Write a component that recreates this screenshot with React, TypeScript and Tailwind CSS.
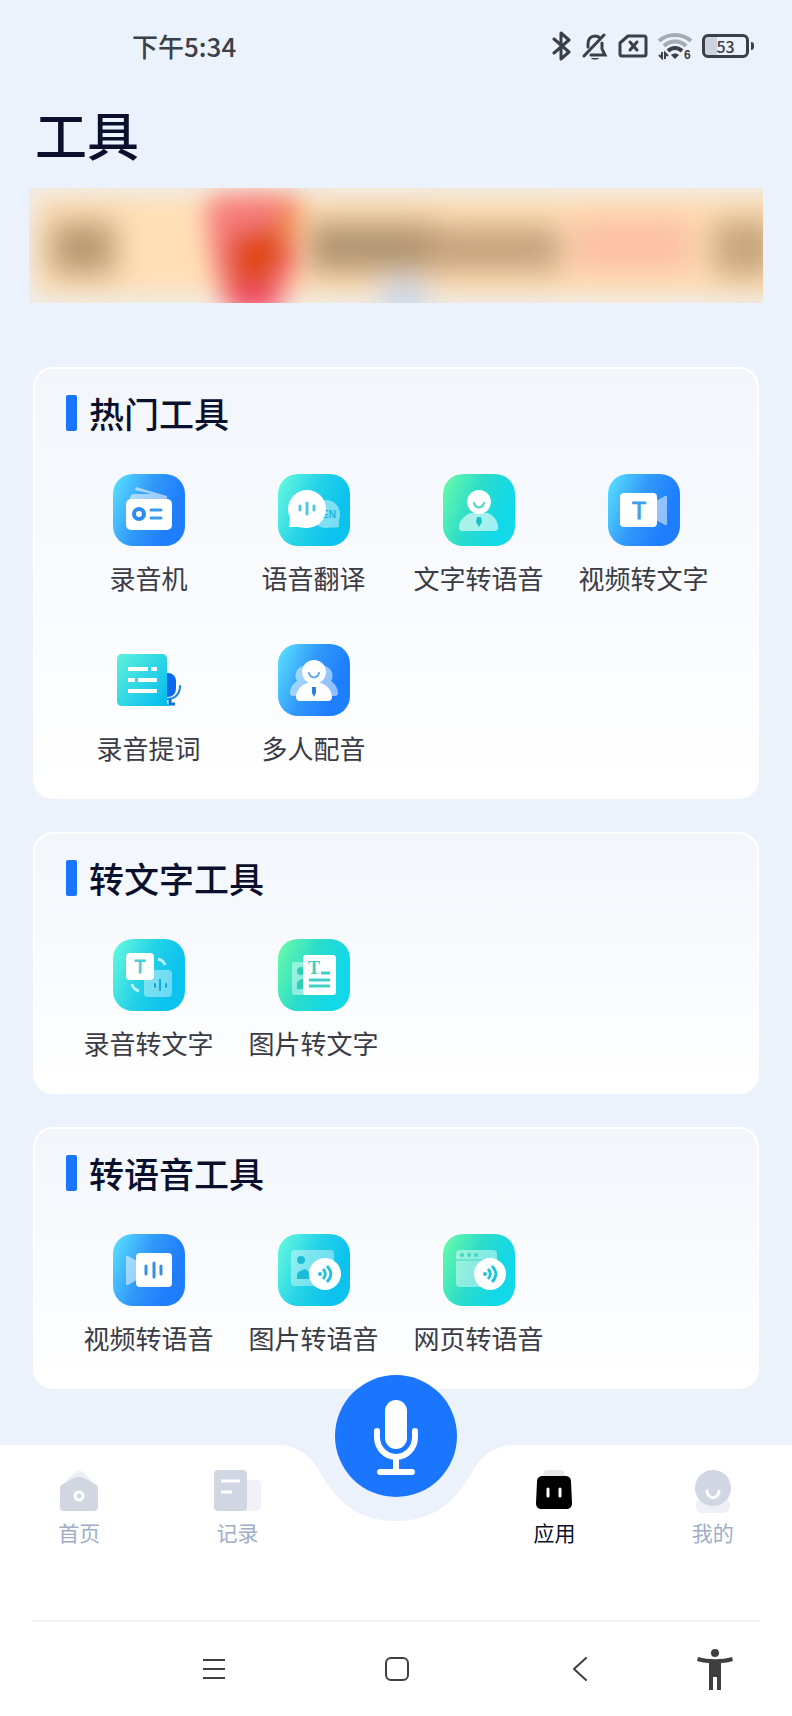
import { type ReactNode } from "react";

type Tone = "blue" | "teal" | "green";

const tones: Record<Tone, [string, string, string]> = {
  blue: ["#55daff", "#3199f9", "#1e7efe"],
  teal: ["#60f6e0", "#26d3e6", "#0cc2ee"],
  green: ["#63f8ac", "#2bdcca", "#12d8e8"],
};

type Tool = { name: string; icon: ReactNode };

const sections: { title: string; tools: Tool[] }[] = [
  {
    title: "热门工具",
    tools: [
      { name: "录音机", icon: <RecorderIcon /> },
      { name: "语音翻译", icon: <TranslateIcon /> },
      { name: "文字转语音", icon: <TextToVoiceIcon /> },
      { name: "视频转文字", icon: <VideoToTextIcon /> },
      { name: "录音提词", icon: <PrompterIcon /> },
      { name: "多人配音", icon: <DubbingIcon /> },
    ],
  },
  {
    title: "转文字工具",
    tools: [
      { name: "录音转文字", icon: <AudioToTextIcon /> },
      { name: "图片转文字", icon: <ImageToTextIcon /> },
    ],
  },
  {
    title: "转语音工具",
    tools: [
      { name: "视频转语音", icon: <VideoToVoiceIcon /> },
      { name: "图片转语音", icon: <ImageToVoiceIcon /> },
      { name: "网页转语音", icon: <WebToVoiceIcon /> },
    ],
  },
];

export default function App() {
  return (
    <div className="flex min-h-screen flex-col bg-[#ebf2fb] font-['Noto_Sans_CJK_SC',sans-serif]">
      <StatusBar />
      <main className="flex-1 px-[33px] pb-14">
        <h1 className="mt-10 pl-0.5 text-[52px] leading-[60px] font-medium text-[#0a102c]">
          工具
        </h1>
        <Banner />
        <div className="mt-16 flex flex-col gap-[33px]">
          {sections.map((section) => (
            <ToolSection key={section.title} {...section} />
          ))}
        </div>
      </main>
      <TabBar />
      <SystemBar />
    </div>
  );
}

function StatusBar() {
  return (
    <header className="flex h-16 items-end justify-between pr-[38px] pl-[132px] text-[#3b3f47]">
      <p className="text-[26px] leading-9 font-medium">下午5:34</p>
      <div className="flex h-9 items-center gap-2.5">
        <svg width="20" height="30" viewBox="0 0 20 30" fill="none" stroke="currentColor" strokeWidth="3" strokeLinejoin="round" strokeLinecap="round">
          <path d="M2 8l15 13-8 7V2l8 7L2 22" />
        </svg>
        <svg width="26" height="28" viewBox="0 0 26 28" fill="none" stroke="currentColor" strokeWidth="3" strokeLinecap="round">
          <path d="M6 15v-3c0-5 3-8 7-8 2 0 4 1 5 2M20 11v6l3 6H9M2 24L22 3" />
          <path d="M9 26h8c-1 2-7 2-8 0z" fill="currentColor" stroke="none" />
        </svg>
        <svg width="30" height="24" viewBox="0 0 30 24" fill="none" stroke="currentColor" strokeWidth="3" strokeLinejoin="round" strokeLinecap="round">
          <path d="M10 2h16a2 2 0 0 1 2 2v16a2 2 0 0 1-2 2H4a2 2 0 0 1-2-2V9z" />
          <path d="M12 8l7 8M19 8l-7 8" />
        </svg>
        <svg className="overflow-visible" width="34" height="28" viewBox="0 0 34 28" fill="none" stroke="currentColor">
          <path d="M1 9c9-8 23-8 32 0M6 14c6-6 16-6 22 0" stroke="#a6acb6" strokeWidth="4" />
          <path d="M10 19c4-4 10-4 14 0" strokeWidth="4" />
          <path d="M13 23l4 4 4-4c-2-2-6-2-8 0z" fill="currentColor" stroke="none" />
          <path d="M4 20v6L1 23M7 27v-6l3 3" strokeWidth="2" />
          <text x="26" y="27" fontSize="12" fontWeight="700" fill="currentColor" stroke="none" fontFamily="Liberation Sans, sans-serif">
            6
          </text>
        </svg>
        <div className="flex items-center gap-0.5">
          <span className="flex h-6 w-[47px] items-center justify-center rounded-md border-3 border-current bg-linear-to-r from-[#cdd3dc] from-30% to-transparent to-30% text-base leading-4 font-medium">
            53
          </span>
          <span className="h-2 w-[3px] rounded-r bg-current" />
        </div>
      </div>
    </header>
  );
}

function Banner() {
  return (
    <svg
      className="-mx-1 mt-6 block h-[115px] w-[calc(100%+8px)]"
      viewBox="0 0 734 115"
      preserveAspectRatio="none"
      role="img"
      aria-label="活动横幅"
    >
      <defs>
        <filter id="soft" x="-50%" y="-100%" width="200%" height="300%">
          <feGaussianBlur stdDeviation="15" />
        </filter>
        <filter id="softer" x="-50%" y="-60%" width="200%" height="220%">
          <feGaussianBlur stdDeviation="12" />
        </filter>
      </defs>
      <rect width="734" height="115" fill="#eeedea" />
      <rect x="6" y="8" width="750" height="99" fill="#ffdfb6" filter="url(#softer)" />
      <g filter="url(#soft)">
        <rect x="22" y="34" width="64" height="52" fill="#b8986f" />
        <rect x="278" y="34" width="130" height="50" fill="#b0946f" />
        <rect x="400" y="38" width="132" height="46" fill="#c6a27c" />
        <rect x="544" y="30" width="120" height="54" fill="#fcc0a2" />
        <rect x="684" y="32" width="64" height="56" fill="#c6a57c" />
        <ellipse cx="375" cy="112" rx="24" ry="20" fill="#c8d6ee" />
      </g>
      <g filter="url(#softer)">
        <path d="M178 12c20-6 60-8 92-2v52c0 20-12 42-22 58h-50c-12-26-20-60-20-108z" fill="#f67c7a" />
        <path d="M198 50l62-20v44l-26 26h-30z" fill="#e04818" />
        <rect x="202" y="100" width="46" height="26" fill="#f0506e" />
        <rect x="250" y="16" width="22" height="40" fill="#f0905c" />
      </g>
    </svg>
  );
}

function ToolSection({ title, tools }: { title: string; tools: Tool[] }) {
  return (
    <section className="rounded-[20px] border-2 border-white bg-linear-to-b from-[#f2f6fb] to-white px-[31px] pt-[26px] pb-[31px]">
      <div className="flex h-9 items-center gap-3">
        <span className="h-9 w-[11px] rounded-xs bg-[#1a75fe]" />
        <h2 className="text-[35px] leading-9 font-medium text-[#0a102c]">{title}</h2>
      </div>
      <div className="mt-[43px] grid grid-cols-4 gap-y-12">
        {tools.map((tool) => (
          <button key={tool.name} type="button" className="flex flex-col items-center">
            {tool.icon}
            <span className="mt-3.5 text-[26px] leading-9 whitespace-nowrap text-[#3a3b45]">
              {tool.name}
            </span>
          </button>
        ))}
      </div>
    </section>
  );
}

function TabBar() {
  return (
    <nav className="relative bg-white pb-[74px]">
      <svg
        className="absolute top-0 left-1/2 -translate-x-1/2"
        width="240"
        height="76"
        viewBox="0 0 240 76"
        fill="#ebf2fb"
      >
        <path d="M0 0C22 0 34 11 42 24C57 50 76 76 120 76S183 50 198 24C206 11 218 0 240 0z" />
      </svg>
      <div className="grid grid-cols-5 pt-[25px]">
        <TabItem label="首页">
          <path d="M24 0c2 0 12 9 13 11H11C12 9 22 0 24 0z" fill="#edeff4" />
          <path d="M5 19c0-3 1-4 3-5l7-4c6-4 12-4 18 0l7 4c2 1 3 2 3 5v17c0 4-1 5-5 5H10c-4 0-5-1-5-5z" fill="#d0d6e2" />
          <circle cx="24" cy="26" r="4" fill="none" stroke="#fff" strokeWidth="3" />
        </TabItem>
        <TabItem label="记录">
          <rect x="22" y="10" width="25" height="31" rx="4" fill="#f0f2f7" />
          <rect x="0" y="0" width="33" height="41" rx="4" fill="#d0d6e2" />
          <path d="M7 11h19M7 22h11" stroke="#fff" strokeWidth="3" />
        </TabItem>
        <button
          type="button"
          aria-label="录音"
          className="absolute -top-[70px] left-1/2 size-[122px] -translate-x-1/2 rounded-full bg-[#1a76ff]"
        >
          <svg viewBox="0 0 122 122" fill="none" stroke="#fff" strokeLinecap="round">
            <rect x="50" y="25" width="22" height="49" rx="11" fill="#fff" stroke="none" />
            <path d="M42 56v6a19 20 0 0 0 38 0v-6M61 83v12" strokeWidth="6" />
            <path d="M45 97h32" strokeWidth="6" />
          </svg>
        </button>
        <span />
        <TabItem label="应用" active>
          <path d="M12 8l2-6c0-1 1-2 3-2h14c2 0 3 1 3 2l2 6z" fill="#e7e7e8" />
          <path d="M13 6h22c4 0 6 2 6 6l1 21c0 4-2 6-6 6H12c-4 0-6-2-6-6l1-21c0-4 2-6 6-6z" fill="#000" />
          <path d="M18 19v7M30 19v7" stroke="#fff" strokeWidth="3" strokeLinecap="round" />
        </TabItem>
        <TabItem label="我的">
          <rect x="7" y="28" width="34" height="15" rx="6" fill="#eef0f5" />
          <circle cx="24" cy="18" r="18" fill="#d0d6e2" />
          <path d="M18 21c1 9 11 9 12 0" fill="none" stroke="#fff" strokeWidth="3" strokeLinecap="round" />
        </TabItem>
      </div>
    </nav>
  );
}

function TabItem({
  label,
  active,
  children,
}: {
  label: string;
  active?: boolean;
  children: ReactNode;
}) {
  return (
    <a href="#" className="flex flex-col items-center">
      <svg width="48" height="44" viewBox="0 0 48 44">
        {children}
      </svg>
      <span
        className={
          active
            ? "mt-1 text-[21px] leading-7 text-[#0a102c]"
            : "mt-1 text-[21px] leading-7 text-[#a0adc6]"
        }
      >
        {label}
      </span>
    </a>
  );
}

function SystemBar() {
  return (
    <footer className="bg-white px-8 text-[#3f3f3f]">
      <div className="h-0.5 bg-[#f4f4f5]" />
      <div className="grid h-[94px] grid-cols-[90fr_184fr_182fr_184fr_86fr_2fr] place-items-center">
        <span />
        <button type="button" aria-label="最近任务">
          <svg width="24" height="24" viewBox="0 0 24 24" stroke="currentColor" strokeWidth="2">
            <path d="M1 3h22M1 12h22M1 21h22" />
          </svg>
        </button>
        <button type="button" aria-label="主屏幕">
          <svg width="24" height="24" viewBox="0 0 24 24" fill="none" stroke="currentColor" strokeWidth="2">
            <rect x="1" y="1" width="22" height="22" rx="5" />
          </svg>
        </button>
        <button type="button" aria-label="返回">
          <svg width="24" height="24" viewBox="0 0 24 24" fill="none" stroke="currentColor" strokeWidth="2" strokeLinecap="round" strokeLinejoin="round">
            <path d="M18 1L6 12l12 11" />
          </svg>
        </button>
        <button type="button" aria-label="无障碍">
          <svg width="36" height="42" viewBox="0 0 36 42" fill="currentColor">
            <circle cx="18" cy="5" r="4" />
            <path d="M1 9c11 3 23 3 34 0l1 4c-4 1-8 2-12 2v27h-4V29h-4v13h-4V15c-4 0-8-1-12-2z" />
          </svg>
        </button>
      </div>
    </footer>
  );
}

function Tile({ tone, children }: { tone: Tone; children: ReactNode }) {
  const [from, mid, to] = tones[tone];

  return (
    <svg width="72" height="72" viewBox="0 0 72 72" fill="none">
      <defs>
        <linearGradient id={`tile-${tone}`} x1="0" y1="0.2" x2="1" y2="0.6">
          <stop offset="0" stopColor={from} />
          <stop offset="0.45" stopColor={mid} />
          <stop offset="0.85" stopColor={to} />
        </linearGradient>
      </defs>
      <rect width="72" height="72" rx="20" fill={`url(#tile-${tone})`} />
      {children}
    </svg>
  );
}

function RecorderIcon() {
  return (
    <Tile tone="blue">
      <path d="M23 13l31 9v4H17c0-4 1-6 5-6h16l-16-4z" fill="#fff" opacity="0.55" />
      <rect x="13" y="25" width="46" height="31" rx="5" fill="#fff" />
      <circle cx="26" cy="40" r="5" stroke="#2a8cf0" strokeWidth="4" />
      <path d="M38 36h10M38 44h10" stroke="#3b9af0" strokeWidth="3" strokeLinecap="round" />
    </Tile>
  );
}

function TranslateIcon() {
  return (
    <Tile tone="teal">
      <path d="M48 26a14 14 0 0 1 14 14c0 4-1 5-1 7v6c-4 1-7 0-13 1a14 14 0 0 1 0-28z" fill="#fff" opacity="0.45" />
      <text x="44" y="44" fontSize="10" fontWeight="700" fill="#1bb6de" fontFamily="Liberation Sans, sans-serif">
        EN
      </text>
      <path d="M29 16a19 19 0 1 1 0 38c-6 0-7-1-11-1h-7l1-8c0-3-2-5-2-10a19 19 0 0 1 19-19z" fill="#fff" />
      <path d="M22 32v4M29 29v11M36 32v4" stroke="#4cc9e4" strokeWidth="3" strokeLinecap="round" />
    </Tile>
  );
}

function TextToVoiceIcon() {
  return (
    <Tile tone="green">
      <path d="M27 39h18c6 3 10 8 10 14 0 3-1 4-4 4H20c-3 0-4-1-4-4 0-6 5-11 11-14z" fill="#fff" opacity="0.6" />
      <circle cx="36" cy="28" r="12" fill="#fff" />
      <path d="M31 29c2 6 8 6 10 0" stroke="#3cd6c0" strokeWidth="2" strokeLinecap="round" />
      <path d="M34 43h4l1 5-3 5-3-5z" fill="#1fc2c2" />
    </Tile>
  );
}

function VideoToTextIcon() {
  return (
    <Tile tone="blue">
      <path d="M48 27l9-5h2v29h-2l-9-5z" fill="#fff" opacity="0.5" />
      <rect x="12" y="19" width="37" height="34" rx="4" fill="#fff" />
      <text x="31" y="45" textAnchor="middle" fontSize="23" fill="#3f9fe8" stroke="#3f9fe8" fontFamily="Liberation Sans, sans-serif">
        T
      </text>
    </Tile>
  );
}

function PrompterIcon() {
  return (
    <svg width="72" height="72" viewBox="0 0 72 72" fill="none">
      <defs>
        <linearGradient id="prompter" x1="0" y1="0" x2="1" y2="0.8">
          <stop offset="0" stopColor="#5ef3dc" />
          <stop offset="1" stopColor="#06bdee" />
        </linearGradient>
      </defs>
      <rect x="46" y="29" width="17" height="24" rx="8" fill="#0a68f0" />
      <path d="M67 42c0 8-5 13-13 13" stroke="#1685e8" strokeWidth="2" strokeLinecap="round" />
      <path d="M57 55v5h5" stroke="#0f72d8" strokeWidth="3" />
      <path d="M9 10h40c3 0 5 2 5 5v42c0 2 1 4 4 5H9c-3 0-5-2-5-5V15c0-3 2-5 5-5z" fill="url(#prompter)" />
      <path d="M15 23h20v4H15zM38 23h6v4h-6zM15 34h7v4h-7zM25 34h19v4H25zM15 45h29v4H15z" fill="#fff" />
    </svg>
  );
}

function DubbingIcon() {
  return (
    <Tile tone="blue">
      <path d="M25 22a10 10 0 0 0-6 15c-4 3-7 7-7 12 0 2 1 3 3 3h42c2 0 3-1 3-3 0-5-3-9-7-12a10 10 0 0 0-6-15z" fill="#fff" opacity="0.5" />
      <circle cx="36" cy="28" r="12" fill="#fff" />
      <path d="M29 39h14c6 2 11 8 11 14 0 2-1 4-4 4H22c-3 0-4-2-4-4 0-6 5-12 11-14z" fill="#fff" />
      <path d="M31 29c2 6 8 6 10 0" stroke="#5ea6ee" strokeWidth="2" strokeLinecap="round" />
      <path d="M34 43h4v6l-2 4-2-4z" fill="#2a7fd8" />
    </Tile>
  );
}

function AudioToTextIcon() {
  return (
    <Tile tone="teal">
      <rect x="31" y="31" width="28" height="27" rx="4" fill="#fff" opacity="0.4" />
      <path d="M42 45v3M47 41v10M53 45v3" stroke="#11a8dc" strokeWidth="2" strokeLinecap="round" />
      <path d="M45 20c4 1 6 3 7 6M19 45c1 4 3 6 7 7" stroke="#fff" strokeWidth="3" opacity="0.7" />
      <rect x="13" y="14" width="28" height="27" rx="4" fill="#fff" />
      <text x="27" y="34" textAnchor="middle" fontSize="18" fill="#48cfe0" stroke="#48cfe0" fontFamily="Liberation Sans, sans-serif">
        T
      </text>
    </Tile>
  );
}

function ImageToTextIcon() {
  return (
    <Tile tone="green">
      <rect x="14" y="23" width="20" height="33" rx="3" fill="#fff" opacity="0.45" />
      <circle cx="23" cy="32" r="4" fill="#2fcfb4" />
      <path d="M19 50v-5c0-3 3-5 7-5v10z" fill="#2fcfb4" />
      <rect x="25" y="16" width="33" height="40" rx="3" fill="#fff" />
      <text x="36" y="35" textAnchor="middle" fontSize="18" fontWeight="700" fill="#3fcfc0" fontFamily="Liberation Serif, serif">
        T
      </text>
      <path d="M43 34h9M31 41h21M31 47h21" stroke="#3fd0c8" strokeWidth="3" />
    </Tile>
  );
}

function VideoToVoiceIcon() {
  return (
    <Tile tone="blue">
      <path d="M13 22h2l9 5v19l-9 5h-2z" fill="#fff" opacity="0.5" />
      <rect x="23" y="19" width="36" height="34" rx="4" fill="#fff" />
      <path d="M33 32v8M41 29v14M48 32v8" stroke="#3590e4" strokeWidth="3" strokeLinecap="round" />
    </Tile>
  );
}

function SpeakerBadge() {
  return (
    <>
      <circle cx="47" cy="40" r="16" fill="#fff" />
      <circle cx="42" cy="40" r="2" fill="#1fc4dc" />
      <path d="M45 35c3 3 3 7 0 10M49 32c5 5 5 11 0 16" stroke="#1fc4dc" strokeWidth="3" />
    </>
  );
}

function ImageToVoiceIcon() {
  return (
    <Tile tone="teal">
      <rect x="13" y="16" width="43" height="36" rx="4" fill="#fff" opacity="0.4" />
      <circle cx="23" cy="26" r="4" fill="#1cbcd8" />
      <path d="M19 45v-4c0-3 3-4 8-6 3 1 5 5 5 10z" fill="#1cbcd8" />
      <SpeakerBadge />
    </Tile>
  );
}

function WebToVoiceIcon() {
  return (
    <Tile tone="green">
      <rect x="13" y="16" width="41" height="37" rx="4" fill="#fff" opacity="0.45" />
      <path d="M13 26h41" stroke="#3fd8c0" strokeWidth="1" />
      <g fill="#3fd8b8">
        <circle cx="19" cy="21" r="2" />
        <circle cx="26" cy="21" r="2" />
        <circle cx="33" cy="21" r="2" />
      </g>
      <SpeakerBadge />
    </Tile>
  );
}
